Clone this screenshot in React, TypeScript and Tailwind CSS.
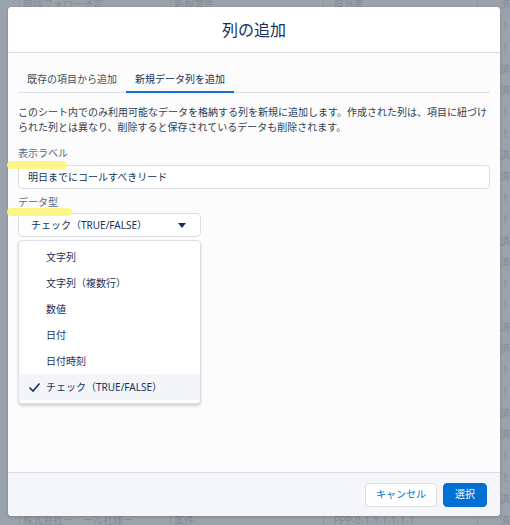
import React from "react";

const FONT = '"Noto Sans", "Noto Sans CJK JP", sans-serif';

const bgRows = Array.from({ length: 25 }, (_, i) => i);

function Background() {
  return (
    <div className="flex flex-col -mt-[6px]">
      {bgRows.map((i) => {
        const edge = i === 0 || i === 24;
        return (
          <div key={i} className="flex h-[21.5px] items-center text-[10px] text-[#848d97] whitespace-nowrap">
            <div className="w-[20px] h-full border-r border-[#8f979f]" />
            <div className="w-[152px] h-full border-r border-[#8f979f] flex items-center pl-[3px]">
              {edge ? (i === 0 ? "商談フォロー予定" : "株式会社ー　ール社様ー") : ""}
            </div>
            <div className="w-[153px] h-full border-r border-[#8f979f] flex items-center pl-[3px]">
              {edge ? (i === 0 ? "新規案件" : "案件") : ""}
            </div>
            <div className="w-[155px] h-full border-r border-[#8f979f] flex items-center pl-[10px]">
              {edge ? (i === 0 ? "担当者" : "PPP-0-1-1-1-1-1-1") : ""}
            </div>
            <div className="flex-1 h-full flex items-center pl-[22px]">
              {i % 4 === 1 || i % 4 === 2 ? "！" : "済"}
            </div>
          </div>
        );
      })}
    </div>
  );
}

const items = ["文字列", "文字列（複数行）", "数値", "日付", "日付時刻", "チェック（TRUE/FALSE）"];

export default function App() {
  return (
    <div
      className="relative w-[510px] h-[525px] overflow-hidden bg-[#9aa2ab]"
      style={{ fontFamily: FONT }}
    >
      <Background />

      <div className="absolute left-[8px] top-[7px] w-[492px] h-[509px] rounded-[4px] bg-[#fcfcfc] flex flex-col overflow-hidden shadow-[0_1px_3px_rgba(0,0,0,0.2)]">
        <div className="h-[46px] shrink-0 bg-white border-b border-[#d8dde6] flex items-center justify-center text-[16px] text-[#16325c]">
          列の追加
        </div>

        <div className="flex-1 px-[10px] pt-[13px] text-[#16325c]">
          <div className="flex h-[27px] border-b border-[#d8dde6] text-[10px]">
            <div className="px-[9px] flex items-center text-[#3e4d63]">既存の項目から追加</div>
            <div className="px-[9px] flex items-center border-b-2 border-[#1b6fd1] -mb-px pt-[2px] text-[#16325c]">
              新規データ列を追加
            </div>
          </div>

          <p className="mt-[12px] text-[10px] leading-[15px] text-[#2f3d52] whitespace-nowrap">
            このシート内でのみ利用可能なデータを格納する列を新規に追加します。作成された列は、項目に紐づけ
            <br />
            られた列とは異なり、削除すると保存されているデータも削除されます。
          </p>

          <div className="mt-[11px] text-[10px] leading-[15px] text-[#54698d]">表示ラベル</div>
          <div className="mt-[4px] h-[24px] rounded-[4px] border border-[#dcdee6] bg-white flex items-center pl-[9px] text-[10px] text-[#16325c]">
            明日までにコールすべきリード
          </div>

          <div className="mt-[6px] text-[10px] leading-[15px] text-[#54698d]">データ型</div>
          <div className="mt-[3px] w-[183px] h-[24px] rounded-[4px] border border-[#dcdee6] bg-white flex items-center justify-between pl-[12px] pr-[14px] text-[10px] text-[#16325c]">
            <span>チェック（TRUE/FALSE）</span>
            <svg width="8" height="5" viewBox="0 0 8 5">
              <path d="M0 0 L8 0 L4 5 Z" fill="#16325c" />
            </svg>
          </div>

          <div className="mt-[3px] w-[183px] rounded-[4px] border border-[#dcdee6] bg-white py-[3px] shadow-[0_2px_3px_rgba(0,0,0,0.16)]">
            {items.map((it, idx) => {
              const sel = idx === items.length - 1;
              return (
                <div
                  key={it}
                  className={
                    "h-[26px] flex items-center text-[10px] text-[#16325c] " +
                    (sel ? "bg-[#f3f5f9]" : "")
                  }
                >
                  <div className="w-[27px] flex justify-end pr-[5px]">
                    {sel && (
                      <svg width="13" height="12" viewBox="0 0 13 12">
                        <path d="M1.5 6.5 L5 10 L11.5 2.5" fill="none" stroke="#16325c" strokeWidth="1.6" />
                      </svg>
                    )}
                  </div>
                  <span>{it}</span>
                </div>
              );
            })}
          </div>
        </div>

        <div className="h-[44px] shrink-0 bg-[#f4f6f9] border-t border-[#d8dde6] flex items-center justify-end gap-[6px] pr-[13px]">
          <button className="h-[24px] w-[72px] rounded-[4px] border border-[#dcdee6] bg-white text-[10px] text-[#0070d2]">
            キャンセル
          </button>
          <button className="h-[24px] w-[44px] rounded-[4px] border border-[#0070d2] bg-[#0070d2] text-[10px] text-white">
            選択
          </button>
        </div>
      </div>

      <div className="absolute left-[7px] top-[161px] w-[60px] h-[8px] rounded-full bg-[#fbf57a]/90" />
      <div className="absolute left-[7px] top-[208px] w-[65px] h-[8px] rounded-full bg-[#fbf57a]/90" />
    </div>
  );
}
